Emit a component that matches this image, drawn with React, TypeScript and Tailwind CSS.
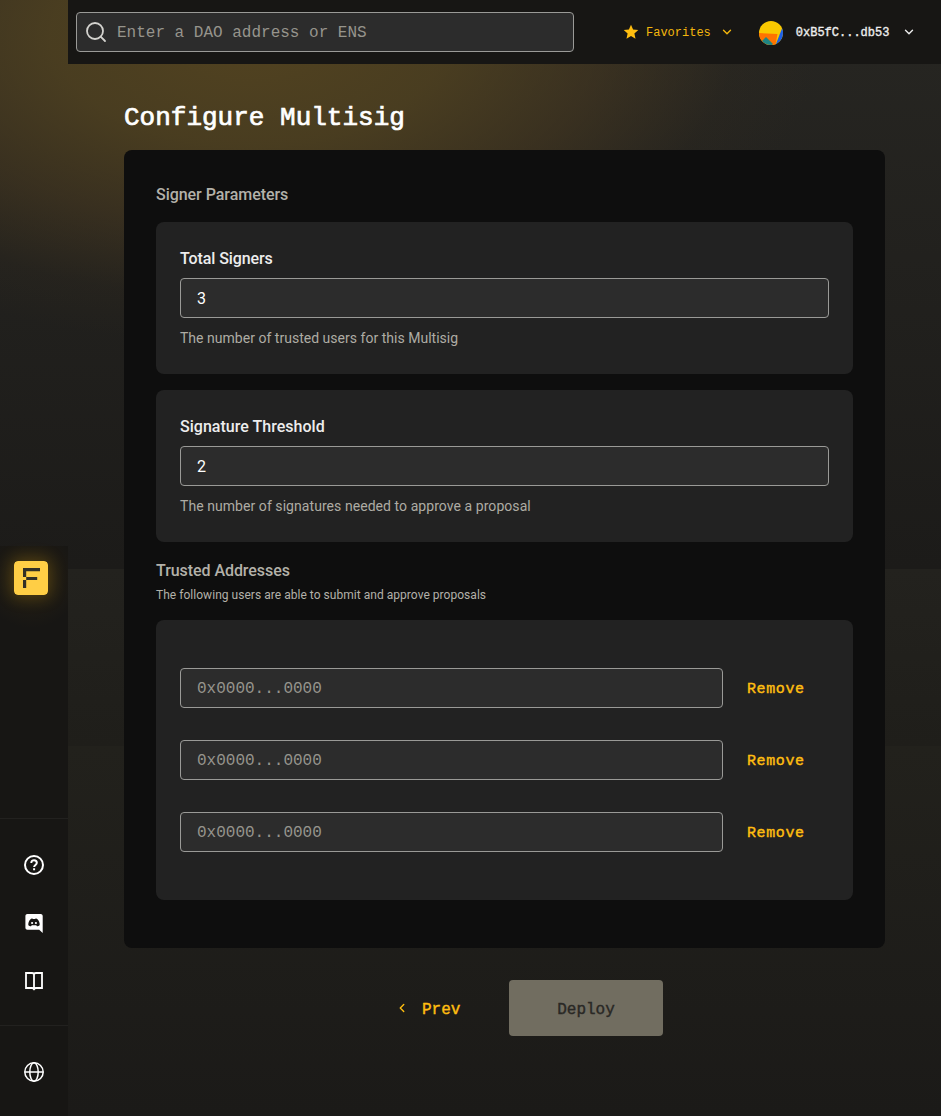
import React from "react";
import { Search, ChevronDown, ChevronLeft } from "lucide-react";

const mono = "font-['Liberation_Mono',monospace]";

function Logo() {
  return (
    <svg width="34" height="34" viewBox="0 0 34 34" className="rounded-[4px] shadow-[0_0_16px_3px_rgba(255,190,20,0.22)]">
      <rect width="34" height="34" rx="4" fill="#ffce45" />
      <path d="M9 7h17v3.200H12.200V16H9zM12.200 16h11v3H12.200zM9 19h3.200v8H9z" fill="#333026" />
    </svg>
  );
}

function Star() {
  return (
    <svg width="16" height="16" viewBox="0 0 16 16" fill="#ffbe10">
      <path d="M8 .8l2.100 4.800 5.200.5-3.900 3.500 1.100 5.100L8 12l-4.500 2.700 1.100-5.100L.7 6.100l5.200-.5z" />
    </svg>
  );
}

function Help() {
  return (
    <svg width="24" height="24" viewBox="0 0 24 24" fill="none" stroke="#fff" strokeWidth="2">
      <circle cx="12" cy="12" r="9" />
      <path d="M9.300 9.900c0-3.700 5.500-3.500 5.500-.1 0 2.100-2.700 2.200-2.700 4.300M12.100 15.200v2" />
    </svg>
  );
}

function Discord() {
  return (
    <svg width="24" height="24" viewBox="0 0 24 24">
      <path d="M5.400 3h13.300c1.100 0 2 .9 2 2v17l-3.500-3.200H5.400c-1.100 0-2-.9-2-2V5c0-1.100.9-2 2-2z" fill="#fff" />
      <path d="M8.500 8.200c1-.6 1.700-.7 2-.7l.3.5h2.400l.3-.5c.3 0 1 .1 2 .7 1.600 1.700 2.300 3.600 2.200 5.700-.8 1-1.900 1.300-2.700 1.300l-.8-1H9.800l-.8 1c-.8 0-1.900-.3-2.700-1.300-.1-2.100.6-4 2.200-5.700z" fill="#171614" />
      <circle cx="10.100" cy="12" r="1.100" fill="#fff" />
      <circle cx="13.900" cy="12" r="1.100" fill="#fff" />
    </svg>
  );
}

function Book() {
  return (
    <svg width="24" height="24" viewBox="0 0 24 24" fill="none" stroke="#fff" strokeWidth="1.800">
      <path d="M12 5c-.5-.7-1-1-2-1H4v15h6c1 0 1.500.2 2 1 .5-.8 1-1 2-1h6V4h-6c-1 0-1.500.3-2 1zM12 4.500V21" />
    </svg>
  );
}

function Globe() {
  return (
    <svg width="24" height="24" viewBox="0 0 24 24" fill="none" stroke="#fff" strokeWidth="1.500">
      <circle cx="12" cy="12" r="9.200" />
      <ellipse cx="12" cy="12" rx="4.200" ry="9.200" />
      <path d="M2.800 12h18.400" />
    </svg>
  );
}

function Avatar() {
  return (
    <svg width="24" height="24" viewBox="0 0 24 24" className="mt-px rounded-full">
      <rect width="24" height="24" fill="#f9c800" />
      <path d="M24 5L16.500 24H24z" fill="#1c5fe8" />
      <path d="M0 12L18.500 13 16.500 24H0z" fill="#ff7300" />
      <path d="M3 20L7 16 14 23 13 24H5z" fill="#1f8583" />
    </svg>
  );
}

function NumberCard({ label, value, help, labelClass, helpClass }: { label: string; value: string; help: string; labelClass: string; helpClass: string }) {
  return (
    <section className="h-[152px] rounded-lg bg-[#222222] px-6 pt-6">
      <div className={`h-6 text-[16px] leading-[26px] font-medium whitespace-nowrap text-[#ededed] ${labelClass}`}>{label}</div>
      <div className="mt-2 flex h-10 items-center rounded border border-[#9a9a97] bg-[#2c2c2c] px-4 pt-0.5 text-[16px] text-white">{value}</div>
      <div className={`mt-2 text-[14px] leading-6 whitespace-nowrap text-[#aeaca4] ${helpClass}`}>{help}</div>
    </section>
  );
}

function AddressRow() {
  return (
    <div className="flex items-center gap-6">
      <div className={`flex h-10 w-[543px] items-center rounded border border-[#9a9a97] bg-[#2c2c2c] px-4 pt-0.5 text-[16px] text-[#96948c] ${mono}`}>0x0000...0000</div>
      <button className={`pt-[5px] text-[15px] tracking-[0.6px] text-[#ffbe10] [-webkit-text-stroke:0.4px_#ffbe10] ${mono}`}>Remove</button>
    </div>
  );
}

export default function App() {
  return (
    <div className="flex h-[1116px] w-[941px] overflow-hidden bg-[radial-gradient(ellipse_570px_310px_at_250px_35px,rgba(84,68,32,0.95)_0%,rgba(82,67,32,0.8)_35%,rgba(76,60,32,0.52)_62%,rgba(52,44,30,0.22)_85%,transparent_100%),linear-gradient(180deg,#272622_0px,#1c1b19_569px,#23221e_569px,#1f1e1a_746px,#22211c_746px,#1b1a18_1116px)] font-['Roboto',sans-serif]">
      <aside className="flex w-[68px] shrink-0 flex-col pt-[546px]">
        <div className="flex h-[272px] justify-start bg-[#171614] bg-[radial-gradient(circle_at_31px_32px,rgba(120,85,10,0.16),transparent_50px)] pt-[15px] pl-[14px]">
          <Logo />
        </div>
        <div className="flex h-[207px] flex-col items-center gap-[34px] border-t border-[#22211f] bg-[#171614] pt-[34px]">
          <Help />
          <Discord />
          <Book />
        </div>
        <div className="flex h-[91px] flex-col items-center border-t border-[#22211f] bg-[#171614] pt-[34px]">
          <Globe />
        </div>
      </aside>
      <div className="flex w-[873px] flex-col">
        <header className="flex h-16 shrink-0 items-center bg-[#171614] pl-2">
          <div className={`flex h-10 w-[498px] items-center rounded border border-[#9a9a97] bg-[#2c2c2c] pl-[7px] text-[16px] text-[#96948c] ${mono}`}>
            <Search size={24} strokeWidth={1.8} color="#d4d3cf" />
            <span className="ml-[9px] pt-0.5">Enter a DAO address or ENS</span>
          </div>
          <button className={`ml-[49px] flex items-center text-[12px] text-[#f4b60d] ${mono}`}>
            <Star />
            <span className="ml-[7px] pt-0.5">Favorites</span>
            <ChevronDown size={14} strokeWidth={2.4} className="ml-[9px]" />
          </button>
          <button className={`ml-[25px] flex items-center text-[12px] text-[#ededed] [-webkit-text-stroke:0.35px_#ededed] ${mono}`}>
            <Avatar />
            <span className="ml-[13px] pt-0.5">0xB5fC...db53</span>
            <ChevronDown size={14} strokeWidth={2.4} className="ml-[13px]" />
          </button>
        </header>
        <main className="flex flex-col px-14 pt-[36px]">
          <h1 className={`h-[50px] text-[26px] leading-9 text-white [-webkit-text-stroke:0.7px_#fff] ${mono}`}>Configure Multisig</h1>
          <div className="h-[798px] rounded-lg bg-[#0e0e0e] px-8 pt-8">
            <h2 className="h-10 text-[16px] leading-[26px] font-medium tracking-[-0.04px] text-[#b3b1a9]">Signer Parameters</h2>
            <div className="flex flex-col gap-4">
              <NumberCard label="Total Signers" value="3" help="The number of trusted users for this Multisig" labelClass="tracking-[-0.1px]" helpClass="tracking-[0.02px]" />
              <NumberCard label="Signature Threshold" value="2" help="The number of signatures needed to approve a proposal" labelClass="tracking-[0.02px]" helpClass="tracking-[0.06px]" />
            </div>
            <h2 className="mt-4 h-6 text-[16px] leading-[26px] font-medium tracking-[-0.06px] text-[#b3b1a9]">Trusted Addresses</h2>
            <p className="h-[38px] text-[12px] leading-[26px] tracking-[0.035px] text-[#b3b1a9]">The following users are able to submit and approve proposals</p>
            <section className="flex h-[280px] flex-col gap-8 rounded-lg bg-[#222222] px-6 pt-12">
              <AddressRow />
              <AddressRow />
              <AddressRow />
            </section>
          </div>
          <div className="mt-8 flex h-14 items-center pl-[271px]">
            <button className={`flex w-[114px] items-center text-[16px] text-[#ffbe10] [-webkit-text-stroke:0.4px_#ffbe10] ${mono}`}>
              <ChevronLeft size={14} strokeWidth={2.4} />
              <span className="ml-[13px] pt-[3px]">Prev</span>
            </button>
            <button className={`h-14 w-[154px] rounded bg-[#716d60] pt-[3px] text-[16px] text-[#292825] [-webkit-text-stroke:0.4px_#292825] ${mono}`}>Deploy</button>
          </div>
        </main>
      </div>
    </div>
  );
}
